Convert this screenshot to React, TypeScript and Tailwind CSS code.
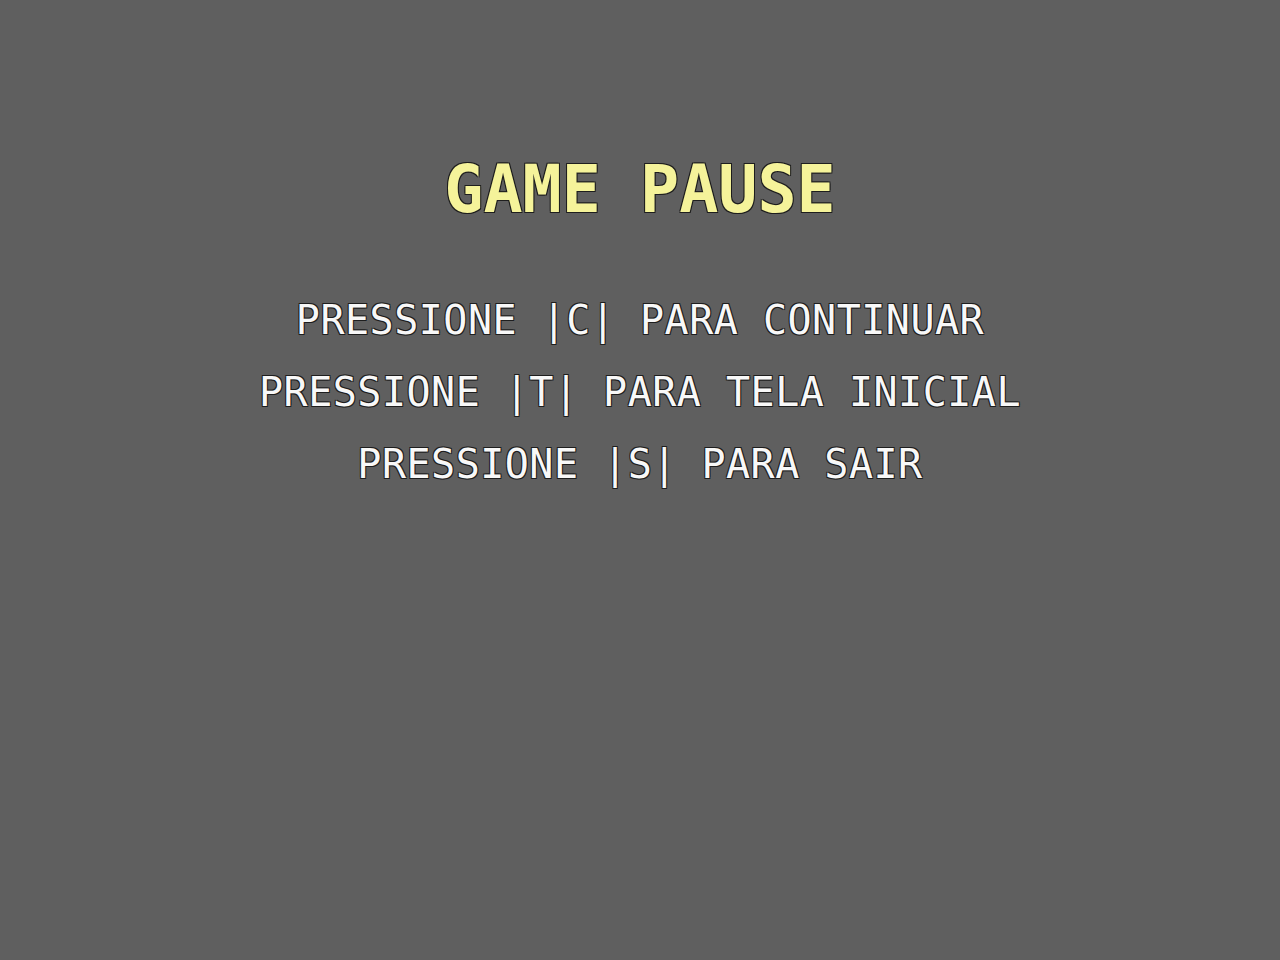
const options = [
    "PRESSIONE |C| PARA CONTINUAR",
    "PRESSIONE |T| PARA TELA INICIAL",
    "PRESSIONE |S| PARA SAIR",
];

export default function App() {
    return (
        <div className="flex h-[960px] w-[1280px] flex-col items-center bg-[#5f5f5f] pt-[157px] font-['DejaVu_Sans_Mono',monospace]">
            <h1 className="text-[65px] font-bold leading-none text-[#f5f39a] [text-shadow:1px_1px_0_#1e1e1e,-1px_-1px_0_#1e1e1e,1px_-1px_0_#1e1e1e,-1px_1px_0_#1e1e1e]">
                GAME PAUSE
            </h1>

            <div className="mt-[62px] flex flex-col items-center">
                {options.map((line) => (
                    <p
                        key={line}
                        className="whitespace-pre text-[40px] leading-[72px] tracking-[0.5px] text-[#f8f8f8] [text-shadow:1px_1px_0_#1e1e1e,-1px_-1px_0_#1e1e1e,1px_-1px_0_#1e1e1e,-1px_1px_0_#1e1e1e]"
                    >
                        {line}
                    </p>
                ))}
            </div>
        </div>
    );
}
